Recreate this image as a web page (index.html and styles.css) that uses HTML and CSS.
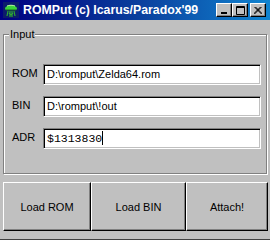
FILE: index.html
```html
<!DOCTYPE html>
<html lang="en">

<head>
    <meta charset="UTF-8">
    <title>ROMPut</title>
    <link rel="stylesheet" href="styles.css">
</head>

<body>
    <div class="window">
        <div class="titlebar">
            <svg class="app-icon" width="16" height="16" viewBox="0 0 16 16">
                <path d="M2 7 C2 2 14 2 14 7 L13 8 L3 8 Z" fill="#3bd13b" />
                <path d="M4 4 C6 3 10 3 12 4" stroke="#b8f8a0" stroke-width="1" fill="none" />
                <path d="M3 8 L13 8" stroke="#1a6a1a" stroke-width="1" />
                <path d="M5 9 L4 14 M7 9 L7 15 M9 9 L9 15 M11 9 L12 14 M6 11 L8 13 M10 11 L8 13" stroke="#2faa2f" stroke-width="1.2" fill="none" />
            </svg>
            <span class="title">ROMPut (c) Icarus/Paradox'99</span>
            <div class="caption-buttons">
                <div class="cap-btn">
                    <svg width="8" height="7" viewBox="0 0 8 7"><rect x="1" y="5" width="6" height="2" fill="#000" /></svg>
                </div>
                <div class="cap-btn">
                    <svg width="9" height="9" viewBox="0 0 9 9"><path d="M0.5 0.5 H8.5 V8.5 H0.5 Z M0.5 1.5 H8.5" stroke="#000" fill="none" /></svg>
                </div>
                <div class="cap-btn close">
                    <svg width="8" height="7" viewBox="0 0 8 7"><path d="M0.5 0 L7.5 7 M1.5 0 L8.5 7 M7.5 0 L0.5 7 M6.5 0 L-0.5 7" stroke="#000" stroke-width="1" /></svg>
                </div>
            </div>
        </div>

        <div class="content">
            <fieldset class="group">
                <legend>Input</legend>
                <div class="fields">
                    <label class="field-label">ROM</label>
                    <div class="textbox">D:\romput\Zelda64.rom</div>
                    <label class="field-label">BIN</label>
                    <div class="textbox">D:\romput\!out</div>
                    <label class="field-label">ADR</label>
                    <div class="textbox mono">$1313830<span class="caret"></span></div>
                </div>
            </fieldset>

            <div class="actions">
                <button class="btn btn-rom">Load ROM</button>
                <button class="btn btn-bin">Load BIN</button>
                <button class="btn btn-attach">Attach!</button>
            </div>
        </div>
    </div>
</body>

</html>
```

FILE: styles.css
```css
body {
    margin: 0;
    background-color: #c0c0c0;
    font-family: "Liberation Sans", Arial, sans-serif;
    font-size: 11px;
    color: #000;
    overflow: hidden;
}

.window {
    width: 270px;
    height: 240px;
    display: flex;
    flex-direction: column;
    box-sizing: border-box;
    border-bottom: 1px solid #404040;
    position: relative;
}

.titlebar {
    height: 20px;
    display: flex;
    align-items: center;
    padding-left: 3px;
    background: linear-gradient(to right, #000080 0%, #0a3d9c 50%, #1084d0 100%);
    color: #fff;
}

.app-icon {
    flex: none;
    background-color: #0c1c6c;
}

.title {
    margin-left: 4px;
    font-weight: bold;
    font-size: 12.3px;
    white-space: nowrap;
    flex: 1;
}

.caption-buttons {
    display: flex;
    margin-right: 4px;
}

.cap-btn {
    width: 16px;
    height: 14px;
    box-sizing: border-box;
    background-color: #c0c0c0;
    border-top: 1px solid #fff;
    border-left: 1px solid #fff;
    border-right: 1px solid #000;
    border-bottom: 1px solid #000;
    box-shadow: inset -1px -1px 0 #808080;
    display: flex;
    align-items: center;
    justify-content: center;
}

.cap-btn.close {
    margin-left: 2px;
}

.content {
    flex: 1;
    padding: 8px 2px 0 3px;
}

.group {
    margin: 0;
    padding: 0;
    height: 146px;
    box-sizing: border-box;
    width: 264px;
    border: 1px solid #808080;
    box-shadow: 1px 1px 0 #fff, inset 1px 1px 0 #fff;
}

.group legend {
    margin-left: 5px;
    padding: 0 1px;
    background-color: #c0c0c0;
    line-height: 13px;
}

.fields {
    display: grid;
    grid-template-columns: 39px 218px;
    row-gap: 11px;
    align-items: center;
    margin-top: 23px;
}

.field-label {
    padding-left: 8px;
    margin-top: -4px;
}

.textbox {
    height: 21px;
    box-sizing: border-box;
    background-color: #fff;
    border-top: 1px solid #808080;
    border-left: 1px solid #808080;
    border-right: 1px solid #fff;
    border-bottom: 1px solid #fff;
    box-shadow: inset 1px 1px 0 #000, inset -1px -1px 0 #c0c0c0;
    padding: 0 3px;
    line-height: 19px;
    white-space: nowrap;
}

.textbox.mono {
    font-family: "Liberation Mono", "Courier New", monospace;
    font-size: 11.5px;
}

.caret {
    display: inline-block;
    width: 1px;
    height: 14px;
    background-color: #000;
    vertical-align: -3px;
}

.actions {
    display: flex;
    margin-top: 8px;
    height: 49px;
}

.btn {
    font-family: "Liberation Sans", Arial, sans-serif;
    font-size: 11px;
    color: #000;
    background-color: #c0c0c0;
    border-top: 1px solid #fff;
    border-left: 1px solid #fff;
    border-right: 1px solid #000;
    border-bottom: 1px solid #000;
    box-shadow: inset -1px -1px 0 #808080;
    padding: 0;
    height: 49px;
}

.btn-rom {
    width: 88px;
}

.btn-bin {
    width: 95px;
}

.btn-attach {
    width: 82px;
}
```
